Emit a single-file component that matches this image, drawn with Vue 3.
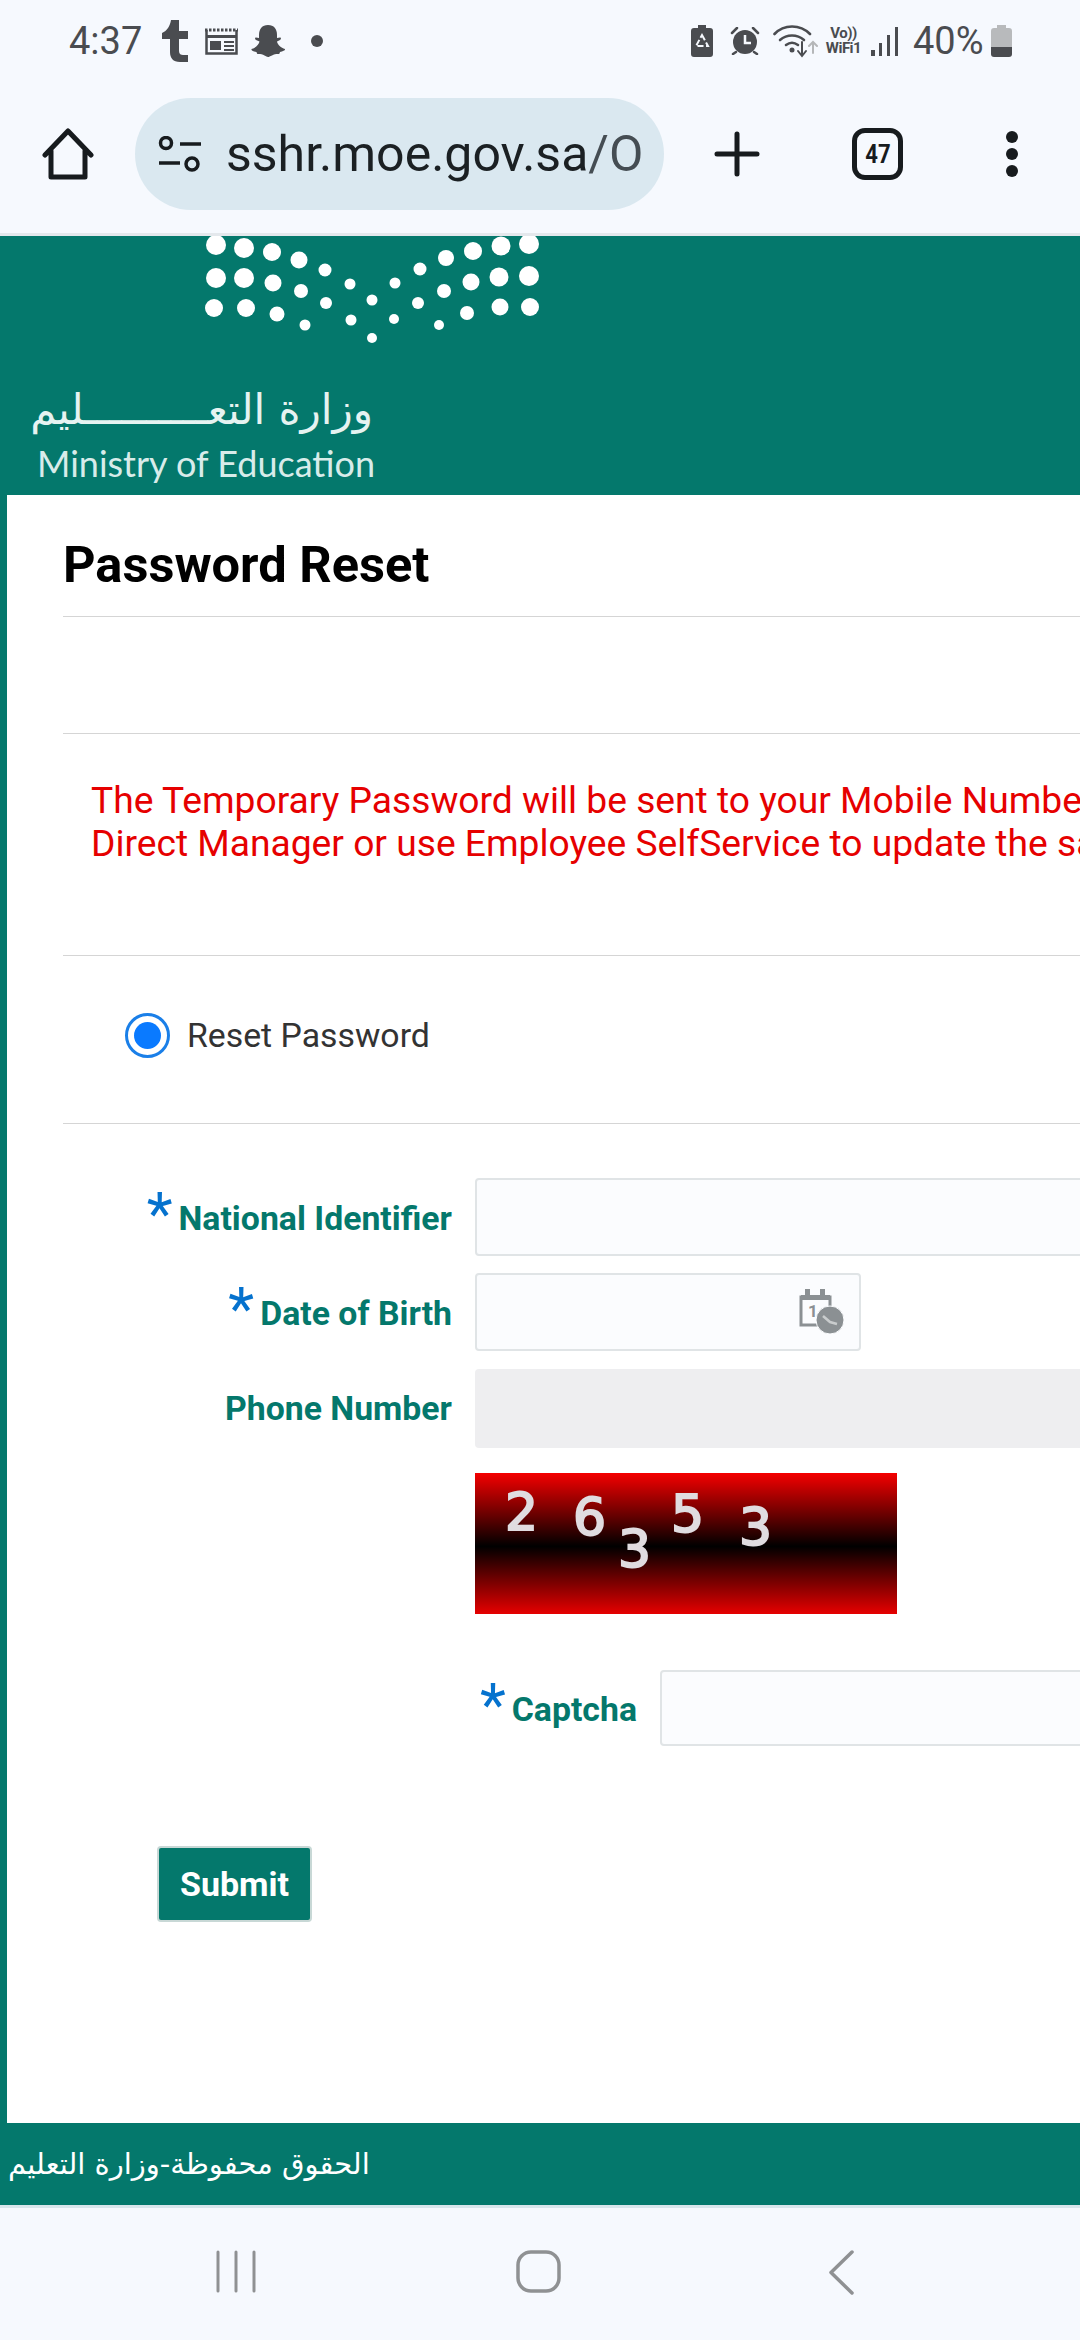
<script setup>
const logoDots = [
    [216, 9, 10], [244, 12, 10], [272, 16, 9], [299, 24, 8.5], [325, 34, 6.5], [350, 48, 5.5], [372, 64, 5.5],
    [395, 47, 5.5], [420, 33, 6.5], [446, 22, 8], [473, 15, 9], [501, 10, 9.5], [529, 8, 10],
    [216, 42, 10], [244, 42, 10], [273, 47, 8.5], [301, 55, 7], [326, 67, 6], [351, 84, 5.5], [372, 102, 5],
    [394, 83, 5], [418, 67, 6], [444, 55, 7], [471, 46, 8.5], [499, 41, 9.5], [529, 40, 10],
    [214, 72, 9], [246, 72, 9], [277, 78, 7.5], [305, 89, 5.5], [439, 89, 5], [467, 77, 7], [500, 71, 8.5], [530, 71, 9],
];

const captchaDigits = [
    { value: '2', left: 30, top: 15 },
    { value: '6', left: 98, top: 20 },
    { value: '3', left: 143, top: 52 },
    { value: '5', left: 196, top: 17 },
    { value: '3', left: 264, top: 30 },
];
</script>

<template>
    <div class="page">
        <header class="chrome">
            <div class="status-bar">
                <div class="status-left">
                    <span class="time">4:37</span>
                    <svg class="st-tumblr" width="28" height="42" viewBox="0 0 28 42">
                        <path fill="#4a4c50" d="M10 0h8v11h9v8h-9v12c0 3 2 4 4 4h5v7h-8c-7 0-10-4-10-10V19H1v-6c5-2 8-7 9-13z" />
                    </svg>
                    <svg class="st-news" width="33" height="28" viewBox="0 0 33 28">
                        <path fill="none" stroke="#4a4c50" stroke-width="2.5" d="M1.500 3v23.500h30V3" />
                        <path fill="none" stroke="#4a4c50" stroke-width="3" stroke-dasharray="2.500 1.500" d="M0 3h33" />
                        <path fill="#4a4c50" d="M1 8h31v3H1zM5 14h11v9H5zM19 14h10v2H19zM19 18h10v2H19zM19 22h10v2H19z" />
                    </svg>
                    <svg class="st-ghost" width="36" height="34" viewBox="0 0 36 34">
                        <path fill="#4a4c50" d="M18 1c6 0 9 4 9 10v3l3-.6c1 0 1.500 1.500 0 2.500l-3 1.500c.5 3 4 6.500 8 7.500.5 1.500-2 2.500-5 3-.5 1.500-.5 2-1.500 2-3 0-4.500 0-6.500 1.500C20 32 19 33 18 33s-2-1-3.500-1.500C12.500 30 11 30 8 30c-1 0-1-.5-1.500-2-3-.5-5.500-1.500-5-3 4-1 7.500-4.500 8-7.500L6 16c-1.500-1-1-2.500 0-2.500l3 .5v-3C9 5 12 1 18 1z" />
                    </svg>
                    <span class="st-dot"></span>
                </div>
                <div class="status-right">
                    <svg width="22" height="32" viewBox="0 0 22 32">
                        <path fill="#4a4c50" d="M7 0h8v3h4c2 0 3 1 3 3v23c0 2-1 3-3 3H3c-2 0-3-1-3-3V6c0-2 1-3 3-3h4z" />
                        <path fill="none" stroke="#f6f9fe" stroke-width="2" stroke-dasharray="6 2.500" d="M11 10l6 11H5z" />
                    </svg>
                    <svg class="st-alarm" width="30" height="28" viewBox="0 0 30 28">
                        <circle cx="15" cy="15" r="12" fill="#4a4c50" />
                        <path fill="none" stroke="#f6f9fe" stroke-width="2.500" d="M15 8v8h6" />
                        <path fill="none" stroke="#4a4c50" stroke-width="2.500" stroke-linecap="round" d="M2 6l5-5M28 6l-5-5M6 25l-3 2M24 25l3 2" />
                    </svg>
                    <svg class="st-wifi" width="45" height="33" viewBox="0 0 45 33">
                        <g fill="none" stroke="#4a4c50" stroke-width="2.600" stroke-linecap="round">
                            <path d="M1.500 9C11-1 27-1 37 9" />
                            <path d="M7 15c7-6 17-6 24 0" />
                            <path d="M13 20c4-3 8-3 12 0" />
                            <path stroke-width="2" d="M29 17v13M25 26l4 5 4-5" />
                            <path stroke="#b5b7b9" stroke-width="2" d="M40 28V18M36 21l4-4 4 4" />
                        </g>
                        <circle cx="19" cy="25" r="2.500" fill="#4a4c50" />
                    </svg>
                    <div class="vowifi">
                        <span>Vo))</span>
                        <span>WiFi1</span>
                    </div>
                    <svg class="st-signal" width="27" height="29" viewBox="0 0 27 29">
                        <path fill="#4a4c50" d="M0 23h4v6H0zM8 16h3v13H8zM16 8h3v21h-3zM24 0h3v29h-3z" />
                    </svg>
                    <span class="battery-text">40%</span>
                    <svg class="st-battery" width="21" height="32" viewBox="0 0 21 32">
                        <path fill="#b8babc" d="M6 0h9v3h3c2 0 3 1 3 3v16H0V6c0-2 1-3 3-3h3z" />
                        <path fill="#4a4c50" d="M0 22h21v7c0 2-1 3-3 3H3c-2 0-3-1-3-3z" />
                    </svg>
                </div>
            </div>

            <div class="toolbar">
                <svg class="tb-home" width="52" height="52" viewBox="0 0 52 52">
                    <path fill="none" stroke="#171b1e" stroke-width="5" stroke-linejoin="round" stroke-linecap="round" d="M3 27L26 3l23 24M9 23v26h34V23" />
                </svg>
                <div class="url-pill">
                    <svg width="43" height="36" viewBox="0 0 43 36">
                        <g fill="none" stroke="#171b1e" stroke-width="3.500">
                            <circle cx="8" cy="7" r="5.500" />
                            <path d="M22 8h21M1 27h21" />
                            <circle cx="34" cy="28" r="6" />
                        </g>
                    </svg>
                    <span class="url-text">sshr.moe.gov.sa<span class="url-fade">/O</span></span>
                </div>
                <svg class="tb-plus" width="46" height="46" viewBox="0 0 46 46">
                    <path fill="none" stroke="#171b1e" stroke-width="5" stroke-linecap="round" d="M23 3v40M3 23h40" />
                </svg>
                <div class="tab-count"><span>47</span></div>
                <svg class="tb-more" width="12" height="46" viewBox="0 0 12 46">
                    <circle cx="6" cy="6" r="6" fill="#171b1e" />
                    <circle cx="6" cy="23" r="6" fill="#171b1e" />
                    <circle cx="6" cy="40" r="6" fill="#171b1e" />
                </svg>
            </div>
        </header>

        <section class="brand">
            <svg class="brand-dots" width="560" height="110" viewBox="0 0 560 110">
                <circle v-for="(dot, i) in logoDots" :key="i" :cx="dot[0]" :cy="dot[1]" :r="dot[2]" fill="#fff" />
            </svg>
            <div class="brand-ar">وزارة التعــــــــــليم</div>
            <div class="brand-en">Ministry of Education</div>
        </section>

        <main class="content">
            <div class="title-row">
                <h1>Password Reset</h1>
            </div>
            <div class="blank-row"></div>
            <div class="message-row">
                <p>The Temporary Password will be sent to your Mobile Number</p>
                <p>Direct Manager or use Employee SelfService to update the same</p>
            </div>
            <div class="radio-row">
                <span class="radio"><span></span></span>
                <span class="radio-label">Reset Password</span>
            </div>

            <form class="reset-form" @submit.prevent>
                <div class="form-row row-id">
                    <label class="field-label"><span class="req">*</span>National Identifier</label>
                    <div class="field wide"></div>
                </div>
                <div class="form-row row-dob">
                    <label class="field-label"><span class="req">*</span>Date of Birth</label>
                    <div class="field date">
                        <svg width="46" height="46" viewBox="0 0 46 46">
                            <path fill="none" stroke="#8b9093" stroke-width="3" d="M2 8h29v28H2z" />
                            <path fill="#8b9093" d="M6 0h5v8H6zM21 0h5v8h-5zM2 6h29v5H2z" />
                            <text x="9" y="28" font-size="17" font-weight="700" fill="#8b9093" font-family="Roboto, sans-serif">1</text>
                            <circle cx="31" cy="31" r="14" fill="#8b9093" stroke="#fbfcfe" stroke-width="1" />
                            <path fill="none" stroke="#c9cccd" stroke-width="2.500" d="M24 27l7 6 7 2" />
                        </svg>
                    </div>
                </div>
                <div class="form-row row-phone">
                    <label class="field-label">Phone Number</label>
                    <div class="field wide disabled"></div>
                </div>
                <div class="captcha">
                    <span
                        v-for="(digit, i) in captchaDigits"
                        :key="i"
                        class="captcha-digit"
                        :style="{ left: digit.left + 'px', top: digit.top + 'px' }"
                    >{{ digit.value }}</span>
                </div>
                <div class="captcha-row">
                    <label class="field-label"><span class="req">*</span>Captcha</label>
                    <div class="field wide"></div>
                </div>
                <button class="submit" type="submit">Submit</button>
            </form>
        </main>

        <footer class="site-footer">
            <span>الحقوق محفوظة-وزارة التعليم</span>
        </footer>

        <nav class="nav-bar">
            <svg width="40" height="43" viewBox="0 0 40 43">
                <path fill="none" stroke="#8f9193" stroke-width="3" stroke-linecap="round" d="M2 2v39M20 2v39M38 2v39" />
            </svg>
            <svg class="nav-home" width="45" height="43" viewBox="0 0 45 43">
                <rect x="2" y="2" width="41" height="39" rx="13" fill="none" stroke="#8f9193" stroke-width="3.500" />
            </svg>
            <svg class="nav-back" width="26" height="45" viewBox="0 0 26 45">
                <path fill="none" stroke="#8f9193" stroke-width="3.500" stroke-linecap="round" stroke-linejoin="round" d="M24 2L3 22.500 24 43" />
            </svg>
        </nav>
    </div>
</template>

<style scoped>
.page {
    width: 1080px;
    height: 2340px;
    display: flex;
    flex-direction: column;
    overflow: hidden;
    background: #fff;
    font-family: Roboto, "Liberation Sans", sans-serif;
}

.chrome {
    height: 236px;
    flex-shrink: 0;
    background: #f6f9fe;
    border-bottom: 3px solid #e4e8ec;
    box-sizing: border-box;
}

.status-bar {
    height: 82px;
    padding: 0 68px 0 69px;
    display: flex;
    align-items: center;
    justify-content: space-between;
}

.status-left,
.status-right {
    display: flex;
    align-items: center;
}

.time {
    width: 73px;
    font-size: 38px;
    color: #4a4c50;
    white-space: nowrap;
}

.st-tumblr {
    margin-left: 19px;
}

.st-news {
    margin-left: 16px;
}

.st-ghost {
    margin-left: 12px;
}

.st-dot {
    width: 12px;
    height: 12px;
    margin-left: 25px;
    border-radius: 50%;
    background: #4a4c50;
}

.st-alarm {
    margin-left: 17px;
}

.st-wifi {
    margin-left: 13px;
}

.vowifi {
    width: 37px;
    margin-left: 7px;
    display: flex;
    flex-direction: column;
    align-items: center;
    font-size: 15px;
    font-weight: 700;
    line-height: 15px;
    color: #4a4c50;
    letter-spacing: -0.5px;
}

.st-signal {
    margin-left: 9px;
}

.battery-text {
    width: 70px;
    margin-left: 15px;
    font-size: 38px;
    color: #4a4c50;
    white-space: nowrap;
}

.st-battery {
    margin-left: 8px;
}

.toolbar {
    height: 112px;
    margin-top: 16px;
    padding-left: 42px;
    display: flex;
    align-items: center;
}

.url-pill {
    width: 529px;
    height: 112px;
    margin-left: 41px;
    padding-left: 23px;
    box-sizing: border-box;
    display: flex;
    align-items: center;
    gap: 25px;
    border-radius: 56px;
    background: #dae8f0;
    overflow: hidden;
}

.url-text {
    font-size: 50px;
    color: #1b2023;
    white-space: nowrap;
}

.url-fade {
    color: #454d53;
}

.tb-plus {
    margin-left: 50px;
}

.tab-count {
    width: 51px;
    height: 52px;
    margin-left: 92px;
    box-sizing: border-box;
    display: flex;
    align-items: center;
    justify-content: center;
    border: 5px solid #171b1e;
    border-radius: 13px;
    color: #171b1e;
    font-size: 26px;
    font-weight: 700;
}

.tab-count span {
    transform: scaleX(0.85);
}

.tb-more {
    margin-left: 103px;
}

.brand {
    height: 259px;
    flex-shrink: 0;
    background: #04786c;
    color: #fff;
}

.brand-dots {
    display: block;
}

.brand-ar {
    width: 335px;
    height: 55px;
    margin: 36px 0 0 38px;
    direction: rtl;
    font-family: "DejaVu Sans", sans-serif;
    font-size: 42px;
    line-height: 55px;
    color: #e6f3f1;
    white-space: nowrap;
}

.brand-en {
    margin: 8px 0 0 37px;
    font-family: Lato, sans-serif;
    font-size: 36px;
    line-height: 36px;
    color: #d8ecea;
    white-space: nowrap;
}

.content {
    flex: 1;
    padding-left: 56px;
    border-left: 7px solid #04786c;
    background: #fff;
}

.title-row {
    padding: 46px 0 27px;
    border-bottom: 1px solid #d5d5d5;
}

.title-row h1 {
    margin: 0;
    font-size: 50.6px;
    font-weight: 700;
    line-height: 48px;
    color: #000;
    white-space: nowrap;
}

.blank-row {
    height: 116px;
    border-bottom: 1px solid #d5d5d5;
}

.message-row {
    height: 221px;
    border-bottom: 1px solid #d5d5d5;
    padding-left: 28px;
    overflow: hidden;
}

.message-row p {
    margin: 0;
    font-size: 37.2px;
    line-height: 43px;
    color: #e60000;
    white-space: nowrap;
}

.message-row p:first-child {
    margin-top: 45px;
}

.radio-row {
    height: 159px;
    padding: 0 0 8px 62px;
    display: flex;
    align-items: center;
    gap: 17px;
    border-bottom: 1px solid #d5d5d5;
}

.radio {
    width: 45px;
    height: 45px;
    box-sizing: border-box;
    display: flex;
    align-items: center;
    justify-content: center;
    border: 3px solid #1a7fe8;
    border-radius: 50%;
}

.radio span {
    width: 27px;
    height: 27px;
    border-radius: 50%;
    background: #0a7aff;
}

.radio-label {
    font-size: 33.8px;
    color: #333;
}

.reset-form {
    padding-top: 54px;
}

.form-row {
    display: flex;
    align-items: center;
    gap: 23px;
}

.row-dob {
    margin-top: 17px;
}

.row-phone {
    margin-top: 18px;
}

.field-label {
    display: block;
    padding-top: 3px;
    font-size: 33.8px;
    font-weight: 700;
    color: #04786c;
    white-space: nowrap;
}

.form-row .field-label {
    width: 389px;
    flex-shrink: 0;
    text-align: right;
}

.row-phone .field-label {
    padding-top: 0;
}

.req {
    margin-right: 6px;
    font-size: 60px;
    font-weight: 400;
    line-height: 0;
    color: #0572ce;
    vertical-align: -4px;
}

.field {
    height: 78px;
    box-sizing: border-box;
    border: 2px solid #e0e4e6;
    border-radius: 4px;
    background: #fbfcfe;
}

.field.wide {
    width: 800px;
    flex-shrink: 0;
}

.field.date {
    width: 386px;
    padding-right: 14px;
    display: flex;
    align-items: center;
    justify-content: flex-end;
}

.field.disabled {
    height: 79px;
    border: 0;
    background: #eeeef0;
}

.captcha {
    position: relative;
    width: 422px;
    height: 141px;
    margin: 25px 0 0 412px;
    background: linear-gradient(180deg, #f40000 0%, #000 52%, #e60000 100%);
}

.captcha-digit {
    position: absolute;
    font-family: "DejaVu Sans", sans-serif;
    font-size: 52px;
    line-height: 48px;
    color: #e0dce0;
    -webkit-text-stroke: 2px #e0dce0;
}

.captcha-row {
    margin: 56px 0 0 412px;
    display: flex;
    align-items: center;
    gap: 23px;
}

.captcha-row .field-label {
    width: 162px;
    flex-shrink: 0;
    text-align: right;
}

.captcha-row .field {
    height: 76px;
}

.submit {
    display: block;
    width: 155px;
    height: 76px;
    margin: 100px 0 0 94px;
    border: 2px solid #c8d8d6;
    border-radius: 4px;
    background: #04786c;
    color: #fff;
    font-family: Roboto, sans-serif;
    font-size: 34px;
    font-weight: 700;
}

.site-footer {
    height: 82px;
    flex-shrink: 0;
    padding-left: 8px;
    display: flex;
    align-items: center;
    background: #04786c;
    color: #fff;
    font-family: "DejaVu Sans", sans-serif;
    font-size: 29px;
}

.nav-bar {
    height: 135px;
    flex-shrink: 0;
    box-sizing: border-box;
    border-top: 3px solid #d8e6ec;
    padding: 42px 0 0 216px;
    display: flex;
    align-items: flex-start;
    background: #f6f9fe;
}

.nav-home {
    margin-left: 260px;
}

.nav-back {
    margin-left: 267px;
}
</style>
